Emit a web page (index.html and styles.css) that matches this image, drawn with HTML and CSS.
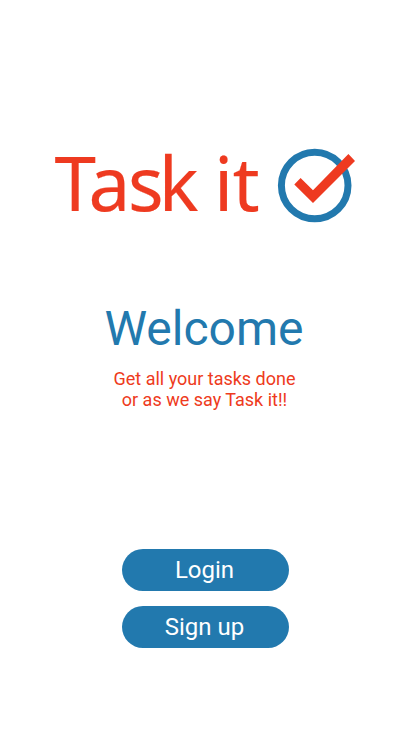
FILE: index.html
```html
<!DOCTYPE html>
<html lang="en">
<head>
<meta charset="utf-8">
<title>Task it</title>
<link rel="stylesheet" href="styles.css">
</head>
<body>
<main class="screen">
  <svg class="logo" viewBox="45 140 321 90" role="img" aria-label="Task it">
    <text class="wordmark" y="210.800" x="54.400 88.400 128 158.700 200 214 232.700">Task it</text>
    <circle class="ring" cx="314.700" cy="185.500" r="33.300"/>
    <path class="tick" d="M294.300 184.400 300.600 178 313 190.200 348.400 154 355 161 313 203Z"/>
  </svg>
  <h1 class="title">Welcome</h1>
  <p class="tagline">Get all your tasks done<br>or as we say Task it!!</p>
  <div class="actions">
    <button class="button">Login</button>
    <button class="button">Sign up</button>
  </div>
</main>
</body>
</html>
```
FILE: styles.css
```css
body { margin: 0; background: #fff; font-family: Roboto, sans-serif; }
.screen { height: 731px; box-sizing: border-box; padding-top: 140px; display: flex; flex-direction: column; align-items: center; }
.logo { width: 321px; height: 90px; overflow: visible; }
.wordmark { font: 74.5px "Noto Sans", sans-serif; fill: #ee3a20; stroke: #ee3a20; stroke-width: .2; }
.ring { fill: none; stroke: #2279ae; stroke-width: 7; }
.tick { fill: #ee3a20; }
.title { margin: 71px 3px 0 0; font-size: 48px; line-height: 56px; font-weight: 400; color: #2279ae; }
.tagline { margin: 11px 2px 0 0; font-size: 18px; line-height: 21px; text-align: center; color: #ee3a20; }
.actions { margin-top: 139px; display: flex; flex-direction: column; gap: 15px; }
.button { width: 167px; height: 42px; padding: 0 2px 0 0; border: 0; border-radius: 21px; background: #2279ae; color: #fff; font: 24px Roboto, sans-serif; }
```
